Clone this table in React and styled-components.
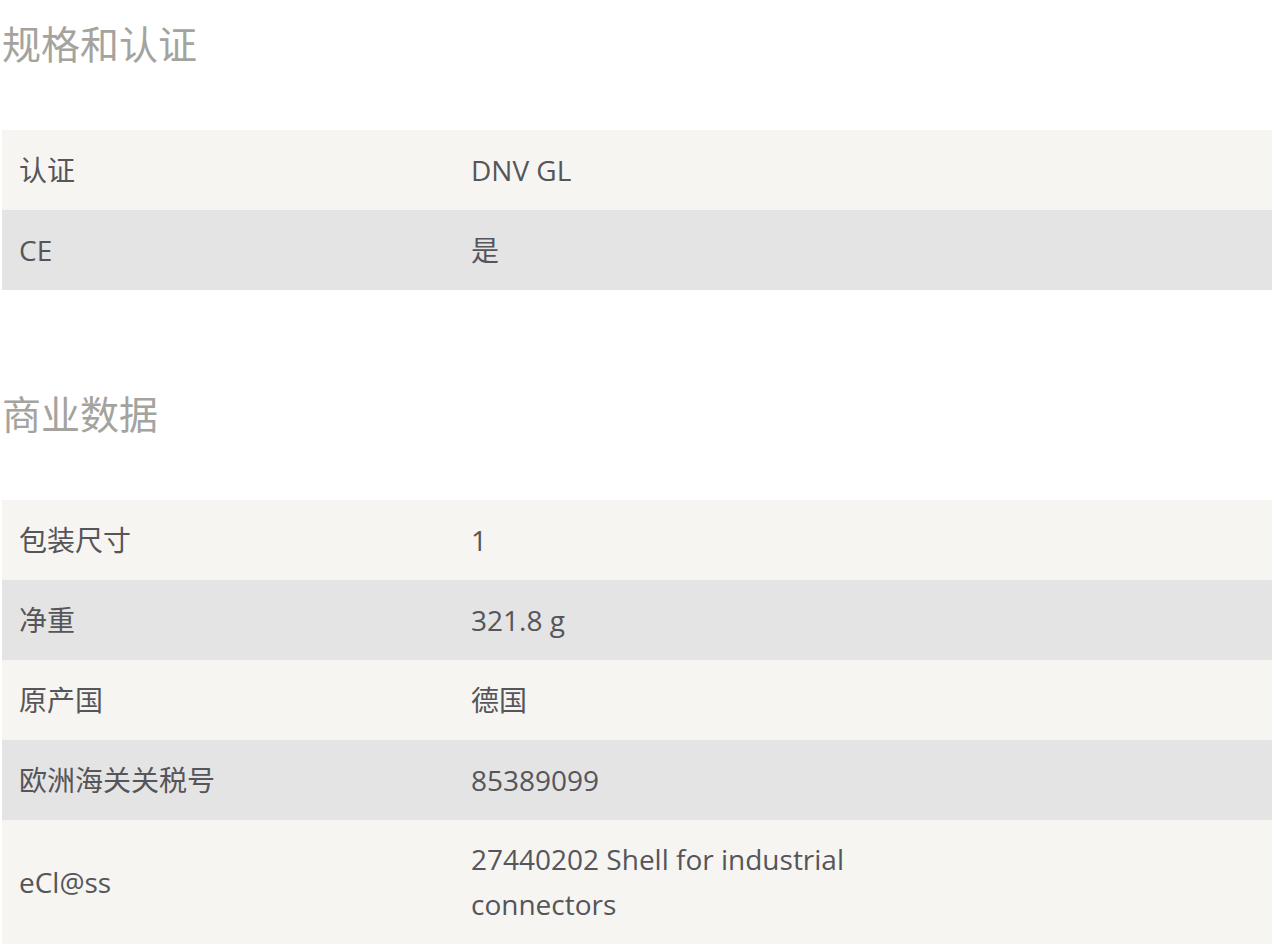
import styled, { createGlobalStyle } from "styled-components"

const GlobalStyle = createGlobalStyle`
    body {
        margin: 0;
        background: #ffffff;
        font-family: "Open Sans", "Noto Sans CJK SC", sans-serif;
    }
`

const sections = [
    {
        title: "规格和认证",
        rows: [
            ["认证", "DNV GL"],
            ["CE", "是"],
        ],
    },
    {
        title: "商业数据",
        rows: [
            ["包装尺寸", "1"],
            ["净重", "321.8 g"],
            ["原产国", "德国"],
            ["欧洲海关关税号", "85389099"],
            ["eCl@ss", "27440202 Shell for industrial connectors"],
        ],
    },
]

const App = () => {
    return <Page>
        <GlobalStyle />
        {sections.map((section) => (
            <Section key={section.title}>
                <Heading>{section.title}</Heading>
                <Table>
                    {section.rows.map(([label, value], i) => (
                        <Row key={label} $alt={i % 2 === 1}>
                            <Label>{label}</Label>
                            <Value>{value}</Value>
                        </Row>
                    ))}
                </Table>
            </Section>
        ))}
    </Page>
}

export default App


const Page = styled.div`
    padding-left: 2px;
    display: flex;
    flex-direction: column;
    gap: 80px;
`
const Section = styled.section`
    display: flex;
    flex-direction: column;
`
const Heading = styled.h2`
    margin: 0 0 46px 0;
    font-size: 39px;
    line-height: 84px;
    font-weight: 400;
    color: #a5a39e;
    font-family: "Noto Sans CJK SC", sans-serif;
`
const Table = styled.div`
    display: flex;
    flex-direction: column;
`
// 행 :
const Row = styled.div`
    display: grid;
    grid-template-columns: 452px 420px;
    align-items: center;
    min-height: 80px;
    padding: 17px 0 17px 17px;
    box-sizing: border-box;
    background-color: ${(p) => (p.$alt ? "#e4e4e4" : "#f6f5f2")};
    color: #55555a;
    font-size: 28px;
    line-height: 45px;
`
const Label = styled.div``
const Value = styled.div``
